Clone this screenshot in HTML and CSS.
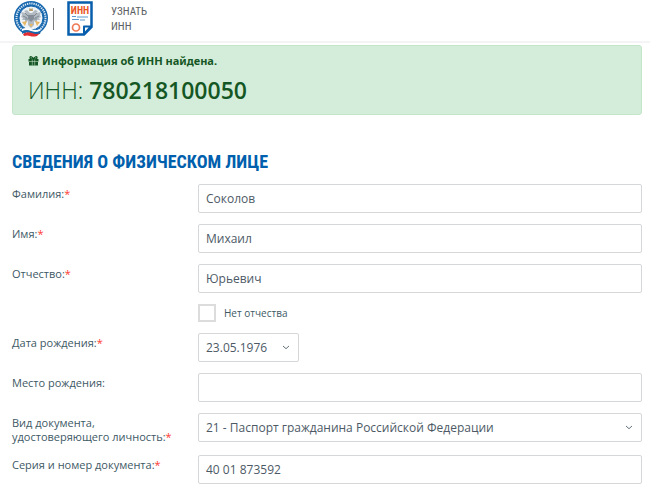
FILE: index.html
```html
<!DOCTYPE html>
<html lang="ru">
<head>
    <meta charset="UTF-8">
    <meta name="viewport" content="width=device-width, initial-scale=1.0">
    <title>Узнать ИНН</title>
    <link rel="stylesheet" href="styles.css">
</head>
<body>

    <header class="header">
        <a class="emblem" href="#" aria-label="Федеральная налоговая служба">
            <svg width="36" height="38" viewBox="0 0 36 38">
                <circle cx="18" cy="18" r="17" fill="#1767ae"/>
                <circle cx="18" cy="18" r="14.5" fill="none" stroke="#dbe9f5" stroke-width="2" stroke-dasharray="1.3 0.9"/>
                <circle cx="18" cy="18" r="12" fill="#eef3f7" stroke="#1767ae" stroke-width="1"/>
                <!-- Eagle -->
                <path d="M17 13 L14 10 L11 11 L13 13 L8 12 L9 15 L8 17 L10 18 L9 20 L12 20 L12 23 L15 21 L15 25 L18 28 L21 25 L21 21 L24 23 L24 20 L27 20 L26 18 L28 17 L27 15 L28 12 L23 13 L25 11 L22 10 L19 13 Z" fill="#b3bbc2"/>
                <path d="M12 13 L15 16 M10 16 L14 18 M12 19 L15 19 M24 13 L21 16 M26 16 L22 18 M24 19 L21 19" stroke="#7d8893" stroke-width="1"/>
                <path d="M16 11 L16.5 8 L18 9 L19.5 8 L20 11 Z" fill="#b39a68"/>
                <path d="M15 15 H21 V19 L18 22 L15 19 Z" fill="#858e98"/>
                <path d="M9 22 L14 21 L12 26 Z M27 22 L22 21 L24 26 Z M16 24 H20 L18 27 Z" fill="#e6b765"/>
                <!-- Flag ribbon -->
                <path d="M9 29 Q13 27 18 29 T28 29 L27 31 Q22 33 17 31 T9 32 Z" fill="#fff"/>
                <path d="M9 31 Q13 29 18 31 T28 31 L27 34 Q22 35 17 33 T9 34 Z" fill="#1767ae"/>
                <path d="M10 34 Q14 31 19 33 T27 33 L24 36 Q20 37 17 36 T11 36 Z" fill="#e22d32"/>
            </svg>
        </a>
        <span class="divider"></span>
        <a class="service" href="#">
            <svg width="26" height="36" viewBox="0 0 26 36">
                <path d="M1.5 2.5 H24.5 V27 L17 34.5 H1.5 Z" fill="#fff" stroke="#075eac" stroke-width="2.5"/>
                <path d="M24 26.5 H17 V34 Z" fill="#fff" stroke="#075eac" stroke-width="2" stroke-linejoin="round"/>
                <text class="doc-text" x="13" y="14" text-anchor="middle">ИНН</text>
                <path d="M5 16.5 H9 M10 17 H21 M5 19.5 H12 M13 20 H18" stroke="#5d99cc" stroke-width="1"/>
                <circle cx="9" cy="27.5" r="3.5" fill="none" stroke="#ee7954" stroke-width="1.7"/>
            </svg>
            <span class="service-name">УЗНАТЬ<br>ИНН</span>
        </a>
    </header>

    <main class="content">
        <section class="alert">
            <p class="alert-title">
                <svg width="11" height="10" viewBox="0 0 11 10" aria-hidden="true">
                    <path d="M0.5 3 H10.5 V5.5 H0.5 Z M1 6 H10 V9.5 H1 Z" fill="#155724"/>
                    <path d="M5.5 3 C4.5 0.5 2 0 2 1.8 Q2 3 5.5 3 C6.5 0.5 9 0 9 1.8 Q9 3 5.5 3" fill="none" stroke="#155724" stroke-width="1.3"/>
                    <path d="M4.3 3.5 V9.5 M6.7 3.5 V9.5" stroke="#d4edda" stroke-width="0.5"/>
                </svg>
                Информация об ИНН найдена.
            </p>
            <p class="inn">ИНН: <b>780218100050</b></p>
        </section>

        <h1>Сведения о физическом лице</h1>

        <form class="form">
            <label for="surname">Фамилия:<span class="req">*</span></label>
            <input class="field" type="text" id="surname" value="Соколов">

            <label for="name">Имя:<span class="req">*</span></label>
            <input class="field" type="text" id="name" value="Михаил">

            <label for="patronymic">Отчество:<span class="req">*</span></label>
            <input class="field" type="text" id="patronymic" value="Юрьевич">

            <div class="check">
                <input type="checkbox" id="no-patronymic">
                <label for="no-patronymic">Нет отчества</label>
            </div>

            <label for="birthday">Дата рождения:<span class="req">*</span></label>
            <div class="select date">
                <select class="field" id="birthday">
                    <option>23.05.1976</option>
                </select>
                <svg class="arrow" width="8" height="5" viewBox="0 0 8 5"><path d="M1 1 L4 3.7 L7 1"/></svg>
            </div>

            <label for="birthplace">Место рождения:</label>
            <input class="field" type="text" id="birthplace">

            <label for="doc-type">Вид документа,<br>удостоверяющего личность:<span class="req">*</span></label>
            <div class="select">
                <select class="field" id="doc-type">
                    <option>21 - Паспорт гражданина Российской Федерации</option>
                </select>
                <svg class="arrow" width="8" height="5" viewBox="0 0 8 5"><path d="M1 1 L4 3.7 L7 1"/></svg>
            </div>

            <label for="doc-number">Серия и номер документа:<span class="req">*</span></label>
            <input class="field" type="text" id="doc-number" value="40 01 873592">
        </form>
    </main>

</body>
</html>
```

FILE: styles.css
```css
/* Global Styles */
* {
    margin: 0;
    padding: 0;
    box-sizing: border-box;
}

body {
    background: #fff;
    color: #405965;
    font-family: "Open Sans", "Noto Sans", sans-serif;
    font-size: 11px;
    line-height: 14px;
}

/* Header */
.header {
    display: flex;
    align-items: flex-start;
    height: 43px;
    padding-left: 13px;
    border-bottom: 2px solid #f4f4f6;
}

.header svg {
    display: block;
}

.divider {
    width: 1px;
    height: 22px;
    margin: 8px 13px 0 4px;
    background: #77777b;
}

.service {
    display: flex;
    gap: 18px;
    color: #5c5f63;
    text-decoration: none;
}

.service-name {
    padding-top: 4px;
    font-family: "Roboto Condensed", Roboto, sans-serif;
    font-size: 11px;
    line-height: 15px;
}

.doc-text {
    font-family: "Roboto Condensed", Roboto, sans-serif;
    font-size: 10px;
    font-weight: bold;
    fill: #e95426;
}

/* Found number */
.content {
    padding: 2px 8px 8px 12px;
}

.alert {
    padding: 8px 15px;
    border: 1px solid #c3e6cb;
    border-radius: 3px;
    background: #d4edda;
    color: #155724;
}

.alert-title {
    display: flex;
    align-items: center;
    gap: 3px;
    font-family: "Noto Sans", sans-serif;
    font-weight: bold;
}

.inn {
    margin-top: 6px;
    font-size: 23px;
    font-weight: 300;
    line-height: 32px;
}

.inn b {
    font-weight: 600;
}

h1 {
    margin: 37px 0 12px;
    color: #0060ad;
    font-family: "Roboto Condensed", Roboto, sans-serif;
    font-size: 18px;
    line-height: 20px;
    font-weight: bold;
    text-transform: uppercase;
}

/* Form */
.form {
    display: grid;
    grid-template-columns: 186px minmax(0, 1fr);
    row-gap: 11px;
    align-items: start;
}

.form > label {
    padding-top: 3px;
}

.req {
    color: #ff3b30;
}

.field {
    display: block;
    width: 100%;
    height: 29px;
    padding: 0 7px;
    border: 1px solid #d5d7d9;
    border-radius: 2px;
    background: #fff;
    color: #4d5a66;
    font-family: inherit;
    font-size: 12px;
    appearance: none;
    outline: none;
}

.field:focus {
    border-color: #0060ad;
}

.select {
    position: relative;
}

.date {
    width: 101px;
}

.arrow {
    position: absolute;
    top: 12px;
    right: 9px;
    fill: none;
    stroke: #65737c;
    stroke-width: 1;
    pointer-events: none;
}

.check {
    grid-column: 2;
    display: flex;
    align-items: center;
    gap: 8px;
    font-size: 10px;
}

.check input {
    width: 18px;
    height: 18px;
    border: 2px solid #dcdcdc;
    background: #fff;
    appearance: none;
}

.check input:checked {
    background: #0060ad;
}
```
